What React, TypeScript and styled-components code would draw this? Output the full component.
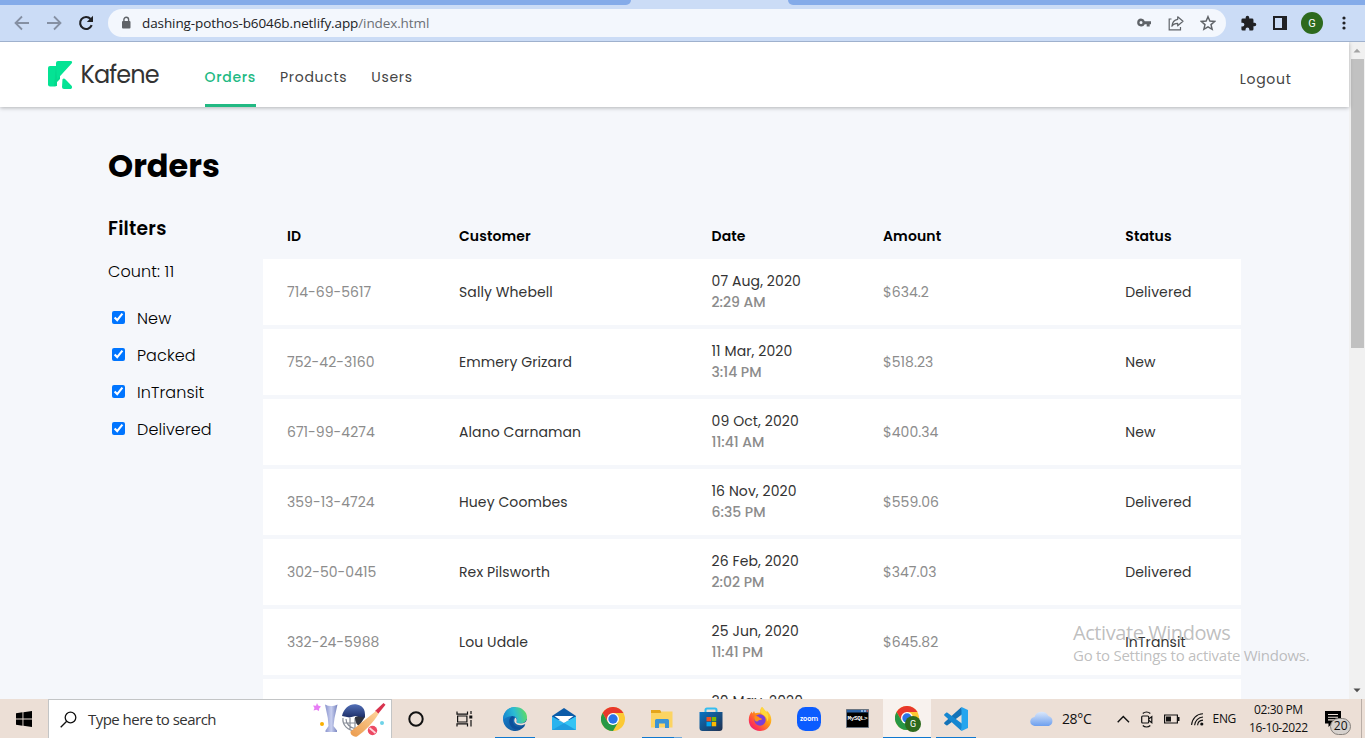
import React from 'react';
import styled, { createGlobalStyle, css } from 'styled-components';

const POPPINS = `Poppins, Inter, sans-serif`;
const SYSTEM = `'Segoe UI', 'Open Sans', 'Noto Sans', sans-serif`;

const GlobalStyle = createGlobalStyle`
  * { box-sizing: border-box; }
  body { margin: 0; overflow: hidden; font-family: ${POPPINS}; }
  h1, h2, p { margin: 0; }
`;

const Screen = styled.div`
  display: flex;
  flex-direction: column;
  width: 1365px;
  height: 738px;
  overflow: hidden;
  position: relative;
`;

/* ---------- Browser chrome ---------- */

const TabStrip = styled.div`
  display: flex;
  justify-content: space-between;
  flex: none;
  height: 5px;
  background: #cbdcf6;
`;

const InactiveTabs = styled.div<{ $side: 'left' | 'right' }>`
  width: ${(p) => (p.$side === 'left' ? 631 : 577)}px;
  background: #84abe9;
  border-radius: ${(p) => (p.$side === 'left' ? '0 0 7px 0' : '0 0 0 7px')};
`;

const BrowserBar = styled.div`
  display: flex;
  align-items: flex-start;
  flex: none;
  height: 37px;
  padding: 4px 0 0 14px;
  background: #cbdcf6;
  border-bottom: 1px solid #9fb1cd;
`;

const NavButtons = styled.div`
  display: flex;
  gap: 16px;
  width: 94px;
  padding-top: 6px;
`;

const AddressBar = styled.div`
  display: flex;
  align-items: center;
  width: 1118px;
  height: 28px;
  padding: 0 10px 0 12px;
  border-radius: 14px;
  background: #f3f7fd;
`;

const Url = styled.div`
  flex: 1;
  margin-left: 10px;
  font: 400 13.5px/28px ${SYSTEM};
  letter-spacing: -0.1px;
  color: #202124;
  span { color: #6b6f75; }
`;

const AddressActions = styled.div`
  display: flex;
  gap: 16px;
`;

const BrowserActions = styled.div`
  display: flex;
  align-items: center;
  height: 28px;
  margin-left: 14px;
  gap: 16px;
`;

const ProfileBadge = styled.div`
  width: 22px;
  height: 22px;
  margin: 0 3px 0 -2px;
  border-radius: 50%;
  background: #2d6a1d;
  color: #fff;
  font: 400 11px/23px Roboto, sans-serif;
  text-align: center;
`;

/* ---------- Page ---------- */

const Viewport = styled.div`
  display: flex;
  flex: none;
  height: 657px;
  overflow: hidden;
`;

const Page = styled.div`
  width: 1349px;
  background: #f5f7fb;
`;

const Header = styled.header`
  position: relative;
  display: flex;
  height: 65px;
  padding: 0 57.5px 0 48px;
  background: #fff;
  box-shadow: 0 1px 4px rgba(0, 0, 0, 0.28);
`;

const Brand = styled.div`
  display: flex;
  width: 156.5px;
  padding-top: 19px;
`;

const BrandName = styled.span`
  margin: -1px 0 0 7.5px;
  font: 400 24px/30px ${POPPINS};
  letter-spacing: -0.9px;
  color: #333;
`;

const NavLink = styled.a<{ $active?: boolean }>`
  height: 65px;
  margin-right: 24px;
  padding-top: 25px;
  font-size: 14px;
  line-height: 21px;
  letter-spacing: 0.7px;
  color: ${(p) => (p.$active ? '#22b983' : '#444')};
  ${(p) => p.$active && css`
    font-weight: 500;
    border-bottom: 3px solid #22b983;
  `}
`;

const Logout = styled.a`
  margin-left: auto;
  padding-top: 27px;
  font-size: 14px;
  line-height: 21px;
  letter-spacing: 0.7px;
  color: #444;
`;

const Main = styled.main`
  padding: 35px 108px 0;
`;

const Title = styled.h1`
  font-size: 32px;
  line-height: 48px;
  font-weight: 700;
  color: #000;
`;

const Columns = styled.div`
  display: flex;
  padding-top: 23px;
`;

const Filters = styled.aside`
  width: 155px;
  color: #000;
  h2 { padding-top: 2px; font-size: 18.72px; line-height: 28px; font-weight: 600; letter-spacing: 0.25px; }
  p { margin: 17px 0 16px; font-size: 16px; line-height: 24px; font-weight: 300; letter-spacing: 0.1px; }
`;

const FilterRow = styled.label`
  display: flex;
  align-items: center;
  height: 37px;
  padding-left: 4px;
  gap: 12px;
  font-size: 16px;
  font-weight: 300;
  line-height: 24px;
  letter-spacing: 0.1px;
  input { width: 13px; height: 13px; margin: 0 0 2px; accent-color: #0075ff; }
`;

const Table = styled.div`
  width: 978px;
`;

const rowGrid = css`
  display: grid;
  grid-template-columns: 172px 252.5px 171.5px 242.3px 139.7px;
  align-items: center;
  font-size: 14px;
  line-height: 21px;
  letter-spacing: 0.1px;
`;

const HeadRow = styled.div`
  ${rowGrid}
  height: 46px;
  font-weight: 600;
  color: #000;
`;

const Row = styled.div`
  ${rowGrid}
  height: 66px;
  margin-bottom: 4px;
  background: #fff;
`;

const Cell = styled.div<{ $muted?: boolean }>`
  padding-left: 24px;
  white-space: nowrap;
  letter-spacing: ${(p) => (p.$muted ? '0.03px' : 'inherit')};
  ${Row} & { color: ${(p) => (p.$muted ? '#8c8c8c' : '#333')}; }
`;

const Time = styled.div`
  color: #8c8c8c;
  font-weight: 500;
  letter-spacing: 0;
`;

const Scrollbar = styled.div`
  display: flex;
  flex-direction: column;
  align-items: center;
  width: 16px;
  background: #f1f1f1;
`;

const Thumb = styled.div`
  width: 13px;
  height: 289px;
  margin-left: 1px;
  background: #c1c1c1;
`;

const ScrollArrow = styled.div<{ $down?: boolean }>`
  display: flex;
  align-items: center;
  justify-content: center;
  width: 16px;
  height: 17px;
  margin-top: ${(p) => (p.$down ? 'auto' : 0)};
  color: ${(p) => (p.$down ? '#505050' : '#a3a3a3')};
  svg { transform: ${(p) => (p.$down ? 'rotate(180deg)' : 'none')}; }
`;

const Activation = styled.div`
  position: absolute;
  left: 1073px;
  top: 620px;
  color: rgba(150, 150, 150, 0.62);
  font: 400 15px/20px ${SYSTEM};
  letter-spacing: -0.27px;
  white-space: nowrap;
  strong { display: block; font-weight: 400; font-size: 20px; line-height: 25px; letter-spacing: -0.43px; }
`;

/* ---------- Taskbar ---------- */

const Taskbar = styled.footer`
  display: flex;
  flex: none;
  height: 39px;
  background: #ecdfd6;
  font-family: ${SYSTEM};
  color: #111;
`;

const StartButton = styled.div`
  display: flex;
  align-items: center;
  width: 48px;
  padding-left: 16px;
`;

const SearchBox = styled.div`
  display: flex;
  align-items: center;
  width: 344px;
  padding: 0 5px 0 11px;
  background: #fff;
  border: 1px solid #c3c5c6;
  border-bottom: 0;
  span { flex: 1; margin-left: 11px; font-size: 15px; line-height: 20px; letter-spacing: -0.53px; color: #333; }
`;

const AppSlot = styled.div<{ $mark?: 'open' | 'stacked' | 'active'; $shift?: number }>`
  display: flex;
  align-items: center;
  justify-content: center;
  width: 49px;
  padding: 1px ${(p) => p.$shift ?? 0}px 0 0;
  ${(p) => p.$mark === 'open' && css`
    background: linear-gradient(#0f78cf, #0f78cf) 5px 38px / 40px 2px no-repeat;
  `}
  ${(p) => p.$mark === 'stacked' && css`
    background:
      linear-gradient(#0f78cf, #0f78cf) 5px 38px / 32px 2px no-repeat,
      linear-gradient(#6fa9dc, #6fa9dc) 37px 38px / 8px 2px no-repeat;
  `}
  ${(p) => p.$mark === 'active' && css`
    padding-left: 2px;
    background: linear-gradient(#0f78cf, #0f78cf) 1px 38px / 48px 2px no-repeat, linear-gradient(#f8f2ee, #f8f2ee) 1px 0 / 48px 39px no-repeat;
  `}
`;

const Tray = styled.div`
  display: flex;
  align-items: center;
  margin-left: auto;
  width: 335px;
`;

const Temperature = styled.span`
  width: 55px;
  margin-left: 7px;
  font-size: 14px;
  letter-spacing: -0.3px;
`;

const TrayIcons = styled.div`
  display: flex;
  align-items: center;
  gap: 11px;
  padding-top: 1px;
`;

const Language = styled.span`
  width: 24px;
  margin-left: 9px;
  font-size: 12px;
  letter-spacing: -0.4px;
`;

const Clock = styled.div`
  width: 64px;
  margin-left: 10px;
  font-size: 12px;
  line-height: 18px;
  letter-spacing: -0.4px;
  text-align: center;
`;

const Notifications = styled.div`
  position: relative;
  display: flex;
  width: 36px;
  margin-left: 15px;
`;

const Count = styled.span`
  position: absolute;
  left: 5px;
  top: 7px;
  width: 21px;
  height: 17px;
  border: 1px solid #85807b;
  border-radius: 9px;
  background: #d6d1cd;
  font-size: 12px;
  line-height: 14px;
  text-align: center;
`;

const ShowDesktop = styled.div`
  width: 4px;
  height: 39px;
  border-left: 1px solid #b9aea7;
`;

/* ---------- Drawings ---------- */

const KafeneMark = () => (
  <svg width="25" height="29" viewBox="0 0 25 29">
    <path d="M2 5h7v18.5a2 2 0 0 1-2 2H2a2 2 0 0 1-2-2V7a2 2 0 0 1 2-2z" fill="#04e394" />
    <path d="M8 5h4v13l-3 3V25H6z" fill="#04d98d" />
    <path d="M10 0h12.600c1.600 0 2 1.300 1 2.400L9 18.500V17L8 5V2a2 2 0 0 1 2-2z" fill="#04e394" />
    <path d="M14.500 18.200c.8-.8 2-.8 2.800 0l6 6.200c1.400 1.500.8 3.600-1.300 3.600h-6a2 2 0 0 1-2-2z" fill="#04e394" />
  </svg>
);

const ArrowIcon = ({ right }: { right?: boolean }) => (
  <svg width="16" height="16" viewBox="0 0 16 16" fill="none" stroke="#8590a3" strokeWidth="1.8">
    <path d={right ? 'M1 8h13M8 1.500 14.500 8 8 14.500' : 'M15 8H2M8 1.500 1.500 8 8 14.500'} />
  </svg>
);

const ReloadIcon = () => (
  <svg width="16" height="16" viewBox="0 0 16 16">
    <path d="M13.700 10.200A6 6 0 1 1 12.600 4" fill="none" stroke="#202124" strokeWidth="2.100" />
    <path d="M15 .8v6.200H8.800z" fill="#202124" />
  </svg>
);

const LockIcon = () => (
  <svg width="12" height="14" viewBox="0 0 12 14">
    <rect x="2" y="5" width="8.500" height="7.500" rx="1" fill="#5f6368" />
    <path d="M3.900 5.500V3.600a2.350 2.350 0 0 1 4.700 0v1.900" fill="none" stroke="#5f6368" strokeWidth="1.400" />
  </svg>
);

const KeyIcon = () => (
  <svg width="16" height="16" viewBox="0 0 16 16" fill="#5f6368">
    <path fillRule="evenodd" d="M5 3.500a4 4 0 0 1 3.800 2.700H15v3h-1.300v2.300h-3V9.200H8.800A4 4 0 1 1 5 3.500zm0 2.500a1.500 1.500 0 1 0 0 3 1.500 1.500 0 0 0 0-3z" />
  </svg>
);

const ShareIcon = () => (
  <svg width="16" height="16" viewBox="0 0 16 16" fill="none" stroke="#5f6368" strokeWidth="1.200">
    <path d="M3.500 4H1.200v10.800h11.300V12" />
    <path d="M9.700 1.800 15 6.300l-5.300 4.500V8.300C7 8.300 5 9.200 3.900 11.300 4.200 7.600 6.200 4.800 9.700 4.300z" strokeLinejoin="round" />
  </svg>
);

const StarIcon = () => (
  <svg width="16" height="16" viewBox="0 0 24 24" fill="none" stroke="#5f6368" strokeWidth="2.200">
    <path d="m12 2.500 2.800 6.600 7.200.6-5.500 4.700 1.700 7L12 17.700l-6.200 3.700 1.700-7L2 9.700l7.200-.6z" />
  </svg>
);

const PuzzleIcon = () => (
  <svg width="17" height="17" viewBox="0 0 24 24" fill="#202124">
    <path d="M20.500 11H19V7a2 2 0 0 0-2-2h-4V3.500a2.500 2.500 0 0 0-5 0V5H4a2 2 0 0 0-2 2v3.800h1.500a2.700 2.700 0 0 1 0 5.400H2V20a2 2 0 0 0 2 2h3.800v-1.500a2.700 2.700 0 0 1 5.400 0V22H17a2 2 0 0 0 2-2v-4h1.500a2.500 2.500 0 0 0 0-5z" />
  </svg>
);

const SidePanelIcon = () => (
  <svg width="14" height="14" viewBox="0 0 14 14">
    <path fillRule="evenodd" d="M0 0h14v14H0zM2 2v10h7V2z" fill="#202124" />
  </svg>
);

const MenuDots = () => (
  <svg width="4" height="14" viewBox="0 0 4 14" fill="#202124">
    <circle cx="2" cy="2" r="1.600" />
    <circle cx="2" cy="7" r="1.600" />
    <circle cx="2" cy="12" r="1.600" />
  </svg>
);

const Caret = () => (
  <svg width="8" height="5" viewBox="0 0 8 5">
    <path d="M.5 4.500 4 .8l3.500 3.700z" fill="currentColor" />
  </svg>
);

const WindowsIcon = () => (
  <svg width="16" height="16" viewBox="0 0 16 16">
    <path d="M0 2.200 6.500 1.300v6.200H0zM7.400 1.200 16 0v7.500H7.400zM0 8.400h6.500v6.300L0 13.800zM7.400 8.400H16V16l-8.600-1.200z" />
  </svg>
);

const SearchIcon = () => (
  <svg width="17" height="17" viewBox="0 0 17 17" fill="none" stroke="#111" strokeWidth="1.300">
    <circle cx="10.500" cy="6.500" r="5.300" />
    <path d="M6.700 10.300.7 16.300" />
  </svg>
);

const CricketArt = () => (
  <svg width="74" height="35" viewBox="0 0 74 35">
    <defs>
      <linearGradient id="cup" x2="1"><stop stopColor="#8791cb" /><stop offset=".5" stopColor="#c9d0f0" /><stop offset="1" stopColor="#7480bc" /></linearGradient>
      <linearGradient id="bat" x1="1" x2="0" y2="1"><stop stopColor="#ffd49a" /><stop offset="1" stopColor="#ea9a4c" /></linearGradient>
      <linearGradient id="helmet" x2="0" y2="1"><stop stopColor="#5370b8" /><stop offset="1" stopColor="#1d2f68" /></linearGradient>
    </defs>
    <path d="m5 1 1.200 2.600L9 4.500 7.200 6.500 7 9 4.500 7.800 1.500 8.500 2.500 6 1 3.600l3 .2z" fill="#e77df5" />
    <circle cx="10" cy="22" r="2" fill="#fbb000" />
    <path d="M13 2.500c4 2 8 2 12.500 0L22.500 16l-1 8 3.500 4.500v1.500H13.500v-1.500l3-4.500-.7-8z" fill="url(#cup)" />
    <path d="M31 16c-1 7 5 13 13 13M34 17c0 5 4 9 10 10M32 21h14M38 16v12M43 16v12" stroke="#8a8f99" fill="none" strokeWidth="1.200" />
    <path d="M43 15c0 5 2 8 4 9l6-9V12z" fill="#31343e" />
    <path d="M30 14C32 5 39 1 45 2.500c7 1.500 9 7 7.500 13l-9-1.500-6 1.500z" fill="url(#helmet)" />
    <path d="m63 9 8.500-8 2 1.800L66 12z" fill="#d8334e" />
    <path d="m64 9 2.500 3C61 21 53 29 45 34.500c-3 1-7-1.500-6.500-5z" fill="url(#bat)" />
    <circle cx="60.500" cy="28.500" r="4.700" fill="#ec4963" />
    <path d="m57.500 26 6 5" stroke="#ffd3da" strokeWidth="1.700" />
    <circle cx="70" cy="21" r="2" fill="#6ed3e8" />
  </svg>
);

const CortanaIcon = () => (
  <svg width="16" height="16" viewBox="0 0 16 16">
    <circle cx="8" cy="8" r="6.700" fill="none" stroke="#111" strokeWidth="2" />
  </svg>
);

const TaskViewIcon = () => (
  <svg width="17" height="16" viewBox="0 0 17 16" fill="none" stroke="#111" strokeWidth="1.200">
    <path d="M1 .5v2.700h10.500V.5M1 15.500v-2.700h10.500v2.700M1.600 5h9.300v6H1.600zM15 0v3M15 9v6.500" />
    <path d="M13.300 4.500h3v3h-3z" fill="#111" stroke="none" />
  </svg>
);

const EdgeIcon = () => (
  <svg width="24" height="24" viewBox="0 0 24 24">
    <defs>
      <linearGradient id="edgeTop" x1="0" y1=".6" x2="1" y2=".4"><stop stopColor="#1685d0" /><stop offset=".5" stopColor="#2cbcd4" /><stop offset="1" stopColor="#5fdb63" /></linearGradient>
      <linearGradient id="edgeBase" x2="1" y2="1"><stop stopColor="#1688d8" /><stop offset="1" stopColor="#114a8b" /></linearGradient>
    </defs>
    <path d="M12 0a12 12 0 1 0 9.500 19.300L24 12z" fill="url(#edgeBase)" />
    <path d="M0 11C1 4 6 0 12 0c7 0 12 5 12 10 0 4-3 6.500-6.500 6.500-3 0-4.500-1-4-2 1.500-2 0-5.500-4-5.500C5 9 1 11 0 14z" fill="url(#edgeTop)" />
    <path d="M9.500 9C6 10 4.500 16 9 20.500c3 2.500 8 2.500 12-1-5 2-10 0-11-4-.5-2.500.5-4 1.500-5z" fill="#0c509c" />
    <path d="M12.500 10.500c-2 2-1.500 5.500 1.500 7 3 1.500 6.500.7 9-.700.6-.9.900-2 1-3.500-1.500 2.400-4 3.400-6.500 3.200-3 0-4.500-1-4-2 .6-1 .2-2.800-1-4z" fill="#ecdfd6" />
  </svg>
);

const MailIcon = () => (
  <svg width="24" height="24" viewBox="0 0 24 24">
    <path d="M0 9 12 1l12 8v4H0z" fill="#0b5ba8" />
    <path d="M2.500 9h19L12 16z" fill="#fff" />
    <path d="M0 9.500 12 16 24 9.500V23H0z" fill="#2ab3ee" />
    <path d="M0 23 12 16l12-6.500V23z" fill="#35c4f4" />
    <path d="M0 23 12 16l12 7z" fill="#1f9de0" />
  </svg>
);

const ChromeIcon = () => (
  <svg width="24" height="24" viewBox="0 0 24 24">
    <circle cx="12" cy="12" r="12" fill="#fcc934" />
    <path d="M1.600 6A12 12 0 0 1 22.400 6H12L6.800 15z" fill="#e8372c" />
    <path d="M1.600 6 6.800 15l5.200 3 5.200-3L12 24A12 12 0 0 1 1.600 6z" fill="#279846" />
    <circle cx="12" cy="12" r="6" fill="#fff" />
    <circle cx="12" cy="12" r="4.700" fill="#2a73e8" />
  </svg>
);

const FolderIcon = () => (
  <svg width="22" height="20" viewBox="0 0 22 20">
    <path d="M0 1h9l1.500 2H21v15H0z" fill="#e5a61b" />
    <path d="M0 4h9.500L11 2.500h10.500v16H0z" fill="#fcd462" />
    <path d="M4 19v-7.500a1.500 1.500 0 0 1 1.500-1.500h11a1.500 1.500 0 0 1 1.500 1.500V19h-4v-4.500H8V19z" fill="#3c94d4" />
  </svg>
);

const StoreIcon = () => (
  <svg width="24" height="24" viewBox="0 0 24 24">
    <defs><linearGradient id="store" x2="1" y2="1"><stop stopColor="#0a74c4" /><stop offset="1" stopColor="#21304e" /></linearGradient></defs>
    <path d="M6.500 6V3a1.500 1.500 0 0 1 1.500-1.500h8A1.500 1.500 0 0 1 17.500 3v3" fill="none" stroke="#34bdf0" strokeWidth="2" />
    <path d="M.5 5h23v16a3 3 0 0 1-3 3h-17a3 3 0 0 1-3-3z" fill="url(#store)" />
    <path d="M7.500 10H12v4.300H7.500z" fill="#f25022" /><path d="M12.700 10h4.500v4.300h-4.500z" fill="#7fba00" />
    <path d="M7.500 15H12v4.300H7.500z" fill="#00a4ef" /><path d="M12.700 15h4.500v4.300h-4.500z" fill="#ffb900" />
  </svg>
);

const FirefoxIcon = () => (
  <svg width="24" height="24" viewBox="0 0 24 24">
    <defs>
      <linearGradient id="fox" x1="1" x2=".1" y2="1"><stop stopColor="#fff04a" /><stop offset=".45" stopColor="#ff980e" /><stop offset=".8" stopColor="#ff3750" /><stop offset="1" stopColor="#e21587" /></linearGradient>
    </defs>
    <path d="M14 0c1.500 1.200 2.300 3 4.500 5 .3-.6.3-1 .1-1.600C22.500 6.500 24 11 23 15.500 21.500 21 17 24 12 24 5 24 .5 19 .8 12.500.900 9 2 6.500 3.700 4.700L4.600 6.500 6 4l1 2.300C9 5.500 11 6 12.500 5.500 12 3.500 12.500 1.500 14 0z" fill="url(#fox)" />
    <circle cx="12" cy="13" r="5.700" fill="#7b3fd6" />
    <path d="M6.500 9.500c2-1 4 0 5.500 1.500 1 .2 2 .5 2 1.200-1 1.300-2.500.3-3.500 1.300-1 1.500-2.500 1-3.500 0-.8-1.500-.8-3-.5-4z" fill="#ff9016" />
    <path d="M14 0c1.500 1.200 2.300 3 4.500 5 2 2.500 2.500 6 1 9.500-.5-4-3-6-5.500-7.500C12 5.500 12.500 2 14 0z" fill="#ffd83b" />
  </svg>
);

const ZoomIcon = () => (
  <svg width="24" height="24" viewBox="0 0 24 24">
    <rect width="24" height="24" rx="8.500" fill="#0b5cff" />
    <text x="12" y="14.300" textAnchor="middle" fontFamily="Poppins, Inter, sans-serif" fontSize="6.500" fontWeight="600" fill="#fff">zoom</text>
  </svg>
);

const MySqlIcon = () => (
  <svg width="24" height="20" viewBox="0 0 24 20">
    <path d="M.5.500h22v18H.5z" fill="#000" stroke="#6a7480" />
    <path d="M1 1h21v2.500H1z" fill="#2b62a6" />
    <path d="M15 1.300h2v1.500h-2zM18 1.300h2v1.500h-2z" fill="#a8c7ec" /><path d="M20.500 1.300h1.500v1.500h-1.500z" fill="#e35b45" />
    <text x="1.500" y="11" fontFamily="Liberation Mono, monospace" fontSize="6" fontWeight="700" textLength="20" fill="#fff">MySQL&gt;</text>
  </svg>
);

const ChromeProfileIcon = () => (
  <svg width="26" height="26" viewBox="0 0 26 26">
    <ChromeIcon />
    <circle cx="18" cy="18" r="8" fill="#2d6a1d" />
    <text x="18" y="21.300" textAnchor="middle" fontFamily="Roboto, sans-serif" fontSize="9" fill="#fff">G</text>
  </svg>
);

const VsCodeIcon = () => (
  <svg width="24" height="24" viewBox="0 0 24 24">
    <path d="M17.500 0 .6 15.200c-.6.500-.6 1.300 0 1.800l1.300 1.100c.5.400 1.100.4 1.600.1L18.500 7z" fill="#1272b8" />
    <path d="M17.500 24 .6 8.800c-.6-.5-.6-1.300 0-1.800l1.300-1.100c.5-.4 1.100-.4 1.600-.1L18.500 17z" fill="#1587d1" />
    <path d="M17.500 0 24 3v18l-6.500 3z" fill="#25a5ee" />
  </svg>
);

const CloudIcon = () => (
  <svg width="25" height="17" viewBox="0 0 25 17">
    <defs><linearGradient id="cloud" x2="0" y2="1"><stop stopColor="#dbe8fb" /><stop offset="1" stopColor="#6d9fee" /></linearGradient></defs>
    <path d="M5 16a4.500 4.500 0 0 1-.5-9A7.500 7.500 0 0 1 18.500 6 5.200 5.200 0 0 1 19 16z" fill="url(#cloud)" />
  </svg>
);

const ChevronIcon = () => (
  <svg width="13" height="8" viewBox="0 0 13 8"><path d="m.7 7.300 5.600-5.800 5.700 5.800" fill="none" stroke="#111" strokeWidth="1.400" /></svg>
);

const MeetNowIcon = () => (
  <svg width="12" height="17" viewBox="0 0 12 17" fill="none" stroke="#111" strokeWidth="1.200">
    <path d="M1.800 2.500c2-2 5.500-2 7.500 0M1.800 14.500c2 2 5.500 2 7.500 0" />
    <rect x=".7" y="5" width="7" height="7" rx="1" /><path d="m8 7.700 2.800-2v6L8 9.500" />
  </svg>
);

const BatteryIcon = () => (
  <svg width="16" height="10" viewBox="0 0 16 10"><path d="M.6 1h12.800v8H.6z" fill="none" stroke="#111" strokeWidth="1.200" /><path d="M2 2.500h5v5H2zM14 3h1.500v4H14z" fill="#111" /></svg>
);

const WifiIcon = () => (
  <svg width="13" height="13" viewBox="0 0 13 13" fill="none" stroke="#111" strokeWidth="1.100">
    <path d="M.6 12C1 5.500 5.500 1 12 .8M3.600 12.300c.2-4.600 3.800-8 8.400-8.300M6.600 12.300c.2-3 2.400-5 5.400-5.200" />
    <circle cx="10.800" cy="11" r="1.600" fill="#111" stroke="none" />
  </svg>
);

const MessageIcon = () => (
  <svg width="16" height="16" viewBox="0 0 16 16">
    <path d="M0 0h16v12.500H7L3.500 16v-3.500H0z" fill="#000" />
    <path d="M3 3.500h10M3 6.200h10M3 8.900h10" stroke="#ecdfd6" strokeWidth="1.100" />
  </svg>
);

/* ---------- Data ---------- */

const filters = ['New', 'Packed', 'InTransit', 'Delivered'];

const orders = [
  { id: '714-69-5617', customer: 'Sally Whebell', date: '07 Aug, 2020', time: '2:29 AM', amount: '$634.2', status: 'Delivered' },
  { id: '752-42-3160', customer: 'Emmery Grizard', date: '11 Mar, 2020', time: '3:14 PM', amount: '$518.23', status: 'New' },
  { id: '671-99-4274', customer: 'Alano Carnaman', date: '09 Oct, 2020', time: '11:41 AM', amount: '$400.34', status: 'New' },
  { id: '359-13-4724', customer: 'Huey Coombes', date: '16 Nov, 2020', time: '6:35 PM', amount: '$559.06', status: 'Delivered' },
  { id: '302-50-0415', customer: 'Rex Pilsworth', date: '26 Feb, 2020', time: '2:02 PM', amount: '$347.03', status: 'Delivered' },
  { id: '332-24-5988', customer: 'Lou Udale', date: '25 Jun, 2020', time: '11:41 PM', amount: '$645.82', status: 'InTransit' },
];

export default function App() {
  return (
    <Screen>
      <GlobalStyle />
      <TabStrip>
        <InactiveTabs $side="left" />
        <InactiveTabs $side="right" />
      </TabStrip>
      <BrowserBar>
        <NavButtons>
          <ArrowIcon />
          <ArrowIcon right />
          <ReloadIcon />
        </NavButtons>
        <AddressBar>
          <LockIcon />
          <Url>dashing-pothos-b6046b.netlify.app<span>/index.html</span></Url>
          <AddressActions>
            <KeyIcon />
            <ShareIcon />
            <StarIcon />
          </AddressActions>
        </AddressBar>
        <BrowserActions>
          <PuzzleIcon />
          <SidePanelIcon />
          <ProfileBadge>G</ProfileBadge>
          <MenuDots />
        </BrowserActions>
      </BrowserBar>

      <Viewport>
        <Page>
          <Header>
            <Brand>
              <KafeneMark />
              <BrandName>Kafene</BrandName>
            </Brand>
            <NavLink $active>Orders</NavLink>
            <NavLink>Products</NavLink>
            <NavLink>Users</NavLink>
            <Logout>Logout</Logout>
          </Header>
          <Main>
            <Title>Orders</Title>
            <Columns>
              <Filters>
                <h2>Filters</h2>
                <p>Count: 11</p>
                {filters.map((name) => (
                  <FilterRow key={name}>
                    <input type="checkbox" defaultChecked />
                    {name}
                  </FilterRow>
                ))}
              </Filters>
              <Table>
                <HeadRow>
                  <Cell>ID</Cell>
                  <Cell>Customer</Cell>
                  <Cell>Date</Cell>
                  <Cell>Amount</Cell>
                  <Cell>Status</Cell>
                </HeadRow>
                {orders.map((o) => (
                  <Row key={o.id}>
                    <Cell $muted>{o.id}</Cell>
                    <Cell>{o.customer}</Cell>
                    <Cell>{o.date}<Time>{o.time}</Time></Cell>
                    <Cell $muted>{o.amount}</Cell>
                    <Cell>{o.status}</Cell>
                  </Row>
                ))}
                <Row>
                  <Cell />
                  <Cell />
                  <Cell>30 May, 2020<Time>&nbsp;</Time></Cell>
                </Row>
              </Table>
            </Columns>
          </Main>
        </Page>
        <Scrollbar>
          <ScrollArrow><Caret /></ScrollArrow>
          <Thumb />
          <ScrollArrow $down><Caret /></ScrollArrow>
        </Scrollbar>
      </Viewport>

      <Activation>
        <strong>Activate Windows</strong>
        Go to Settings to activate Windows.
      </Activation>

      <Taskbar>
        <StartButton><WindowsIcon /></StartButton>
        <SearchBox>
          <SearchIcon />
          <span>Type here to search</span>
          <CricketArt />
        </SearchBox>
        <AppSlot $shift={1}><CortanaIcon /></AppSlot>
        <AppSlot $shift={3}><TaskViewIcon /></AppSlot>
        <AppSlot $mark="open"><EdgeIcon /></AppSlot>
        <AppSlot><MailIcon /></AppSlot>
        <AppSlot><ChromeIcon /></AppSlot>
        <AppSlot $mark="stacked"><FolderIcon /></AppSlot>
        <AppSlot><StoreIcon /></AppSlot>
        <AppSlot><FirefoxIcon /></AppSlot>
        <AppSlot><ZoomIcon /></AppSlot>
        <AppSlot><MySqlIcon /></AppSlot>
        <AppSlot $mark="active"><ChromeProfileIcon /></AppSlot>
        <AppSlot $mark="open"><VsCodeIcon /></AppSlot>
        <Tray>
          <CloudIcon />
          <Temperature>28°C</Temperature>
          <TrayIcons>
            <ChevronIcon />
            <MeetNowIcon />
            <BatteryIcon />
            <WifiIcon />
          </TrayIcons>
          <Language>ENG</Language>
          <Clock>02:30 PM<br />16-10-2022</Clock>
          <Notifications>
            <MessageIcon />
            <Count>20</Count>
          </Notifications>
          <ShowDesktop />
        </Tray>
      </Taskbar>
    </Screen>
  );
}
